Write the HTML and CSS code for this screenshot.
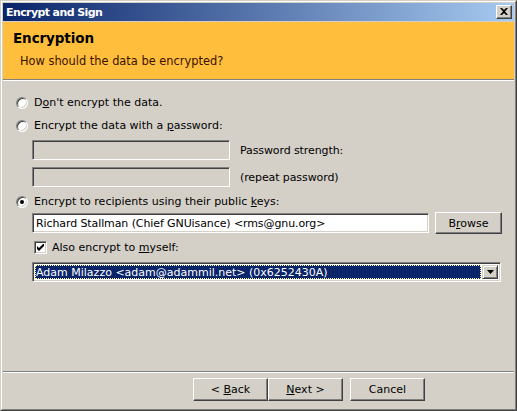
FILE: index.html
```html
<!DOCTYPE html>
<html>
<head>
<meta charset="utf-8">
<link rel="stylesheet" href="styles.css">
</head>
<body>
<div class="window">
  <div class="frame">
    <div class="titlebar">
      <span class="title">Encrypt and Sign</span>
      <span class="close"><svg width="8" height="7" viewBox="0 0 8 7"><path d="M0 0h2l2 2 2-2h2L5 3.5 8 7H6L4 5 2 7H0l3-3.5z" fill="#000"/></svg></span>
    </div>
    <div class="header">
      <div class="h-title">Encryption</div>
      <div class="h-sub">How should the data be encrypted?</div>
    </div>
    <div class="content">
      <div class="row r1"><span class="radio"></span><span>D<u>o</u>n't encrypt the data.</span></div>
      <div class="row r2"><span class="radio"></span><span>Encrypt the data with a <u>p</u>assword:</span></div>
      <div class="pwrow p1"><span class="field grey"></span><span class="lbl">Password strength:</span></div>
      <div class="pwrow p2"><span class="field grey"></span><span class="lbl">(repeat password)</span></div>
      <div class="row r3"><span class="radio checked"></span><span>Encrypt to recipients using their public <u>k</u>eys:</span></div>
      <div class="recrow"><span class="field white rec">Richard Stallman (Chief GNUisance) &lt;rms@gnu.org&gt;</span><span class="btn browse"><span>B<u>r</u>owse</span></span></div>
      <div class="row chkrow"><span class="check"><svg width="7" height="7" viewBox="0 0 7 7"><path d="M0 2v3l2 2 5-5V-1L2 4z" fill="#000"/></svg></span><span>Also encrypt to <u>m</u>yself:</span></div>
      <div class="combo"><span class="sel">Adam Milazzo &lt;adam@adammil.net&gt; (0x6252430A)</span><span class="drop"><svg width="7" height="4" viewBox="0 0 7 4"><path d="M0 0h7L3.5 4z" fill="#000"/></svg></span></div>
    </div>
    <div class="footer">
      <span class="btn"><span>&lt; <u>B</u>ack</span></span><span class="btn"><span><u>N</u>ext &gt;</span></span><span class="btn cancel"><span>Cancel</span></span>
    </div>
  </div>
</div>
</body>
</html>
```
FILE: styles.css
```css
html, body { margin: 0; padding: 0; background: #D4D0C8; }
body { font-family: "DejaVu Sans", sans-serif; font-size: 11px; color: #000; }
.window {
  width: 517px; height: 411px; box-sizing: border-box;
  border: 1px solid; border-color: #D4D0C8 #404040 #404040 #D4D0C8;
}
.frame {
  height: 100%; box-sizing: border-box;
  border: 1px solid; border-color: #fff #808080 #808080 #fff;
  padding: 1px; display: flex; flex-direction: column; background: #D4D0C8;
}
.titlebar {
  height: 18px; flex: none;
  background: linear-gradient(to right, #0A246A, #A6CAF0);
  display: flex; align-items: center; justify-content: space-between;
  padding: 0 2px 0 3px; margin-bottom: 1px;
}
.title { color: #fff; font-weight: bold; letter-spacing: -0.6px; }
.close {
  width: 16px; height: 14px; box-sizing: border-box; background: #D4D0C8;
  border: 1px solid; border-color: #fff #404040 #404040 #fff;
  box-shadow: inset -1px -1px 0 #808080;
  display: flex; align-items: center; justify-content: center; padding: 0 1px 1px 0;
}
.header {
  height: 58px; flex: none; background: #FFBF3D; box-sizing: border-box;
  padding: 8px 0 0 10px;
  border-bottom: 1px solid #808080; box-shadow: 0 1px 0 #fff;
}
.h-title { font-weight: bold; font-size: 13.5px; height: 20px; letter-spacing: -0.1px; }
.h-sub { color: #3a1000; padding: 4px 0 0 7px; font-size: 11.4px; }
.content { flex: 1; padding: 15px 0 0 13px; display: flex; flex-direction: column; }
.row { display: flex; align-items: center; height: 15px; }
.r1 { margin-bottom: 8px; }
.r2 { margin-bottom: 7px; }
.radio {
  width: 12px; height: 12px; border-radius: 50%; box-sizing: border-box;
  background: #fff; border: 1px solid; border-color: #808080 #fff #fff #808080;
  box-shadow: inset 1px 1px 0 #404040, inset -1px -1px 0 #D4D0C8;
  margin-right: 6px; position: relative; flex: none;
}
.radio.checked::after {
  content: ""; position: absolute; left: 3px; top: 3px; width: 4px; height: 4px; border-radius: 50%; background: #000;
}
.pwrow { display: flex; align-items: center; height: 20px; padding-left: 16px; }
.p1 { margin-bottom: 7px; }
.p2 { margin-bottom: 7px; }
.field {
  box-sizing: border-box; height: 20px; display: flex; align-items: center;
  border: 1px solid; border-color: #808080 #fff #fff #808080;
  box-shadow: inset 1px 1px 0 #404040, inset -1px -1px 0 #D4D0C8;
}
.grey { width: 198px; background: #D4D0C8; }
.lbl { margin-left: 10px; letter-spacing: -0.1px; }
.recrow { display: flex; align-items: center; height: 22px; padding-left: 16px; margin-top: 3px; }
.white { background: #fff; }
.rec { width: 397px; padding-left: 3px; letter-spacing: -0.1px; white-space: nowrap; overflow: hidden; }
.btn {
  box-sizing: border-box; display: flex; align-items: center; justify-content: center;
  background: #D4D0C8; border: 1px solid; border-color: #fff #404040 #404040 #fff;
  box-shadow: inset -1px -1px 0 #808080; white-space: pre;
}
.browse { width: 67px; height: 22px; margin-left: 6px; }
.chkrow { margin-top: 6px; padding-left: 18px; }
.check {
  width: 13px; height: 13px; box-sizing: border-box; background: #fff; flex: none;
  border: 1px solid; border-color: #808080 #fff #fff #808080;
  box-shadow: inset 1px 1px 0 #404040, inset -1px -1px 0 #D4D0C8;
  display: flex; align-items: center; justify-content: center; margin-right: 5px;
}
.combo {
  margin-top: 7px; margin-left: 16px; width: 469px; height: 20px; box-sizing: border-box;
  border: 1px solid; border-color: #808080 #fff #fff #808080;
  box-shadow: inset 1px 1px 0 #404040, inset -1px -1px 0 #D4D0C8;
  background: #fff; display: flex; padding: 2px;
}
.sel {
  flex: 1; background: #0A246A; color: #fff; outline: 1px dotted #FFFF99; outline-offset: -1px;
  display: flex; align-items: center; padding-left: 1px; white-space: nowrap; overflow: hidden;
}
.drop {
  width: 16px; box-sizing: border-box; background: #D4D0C8; margin-left: 1px;
  border: 1px solid; border-color: #D4D0C8 #404040 #404040 #D4D0C8;
  box-shadow: inset 1px 1px 0 #fff, inset -1px -1px 0 #808080;
  display: flex; align-items: center; justify-content: center;
}
.footer {
  height: 37px; flex: none; border-top: 1px solid #808080; box-shadow: inset 0 1px 0 #fff;
  display: flex; align-items: flex-start; padding: 6px 0 0 190px; box-sizing: border-box;
}
.footer .btn { width: 75px; height: 23px; }
.footer .cancel { margin-left: 7px; }
```
